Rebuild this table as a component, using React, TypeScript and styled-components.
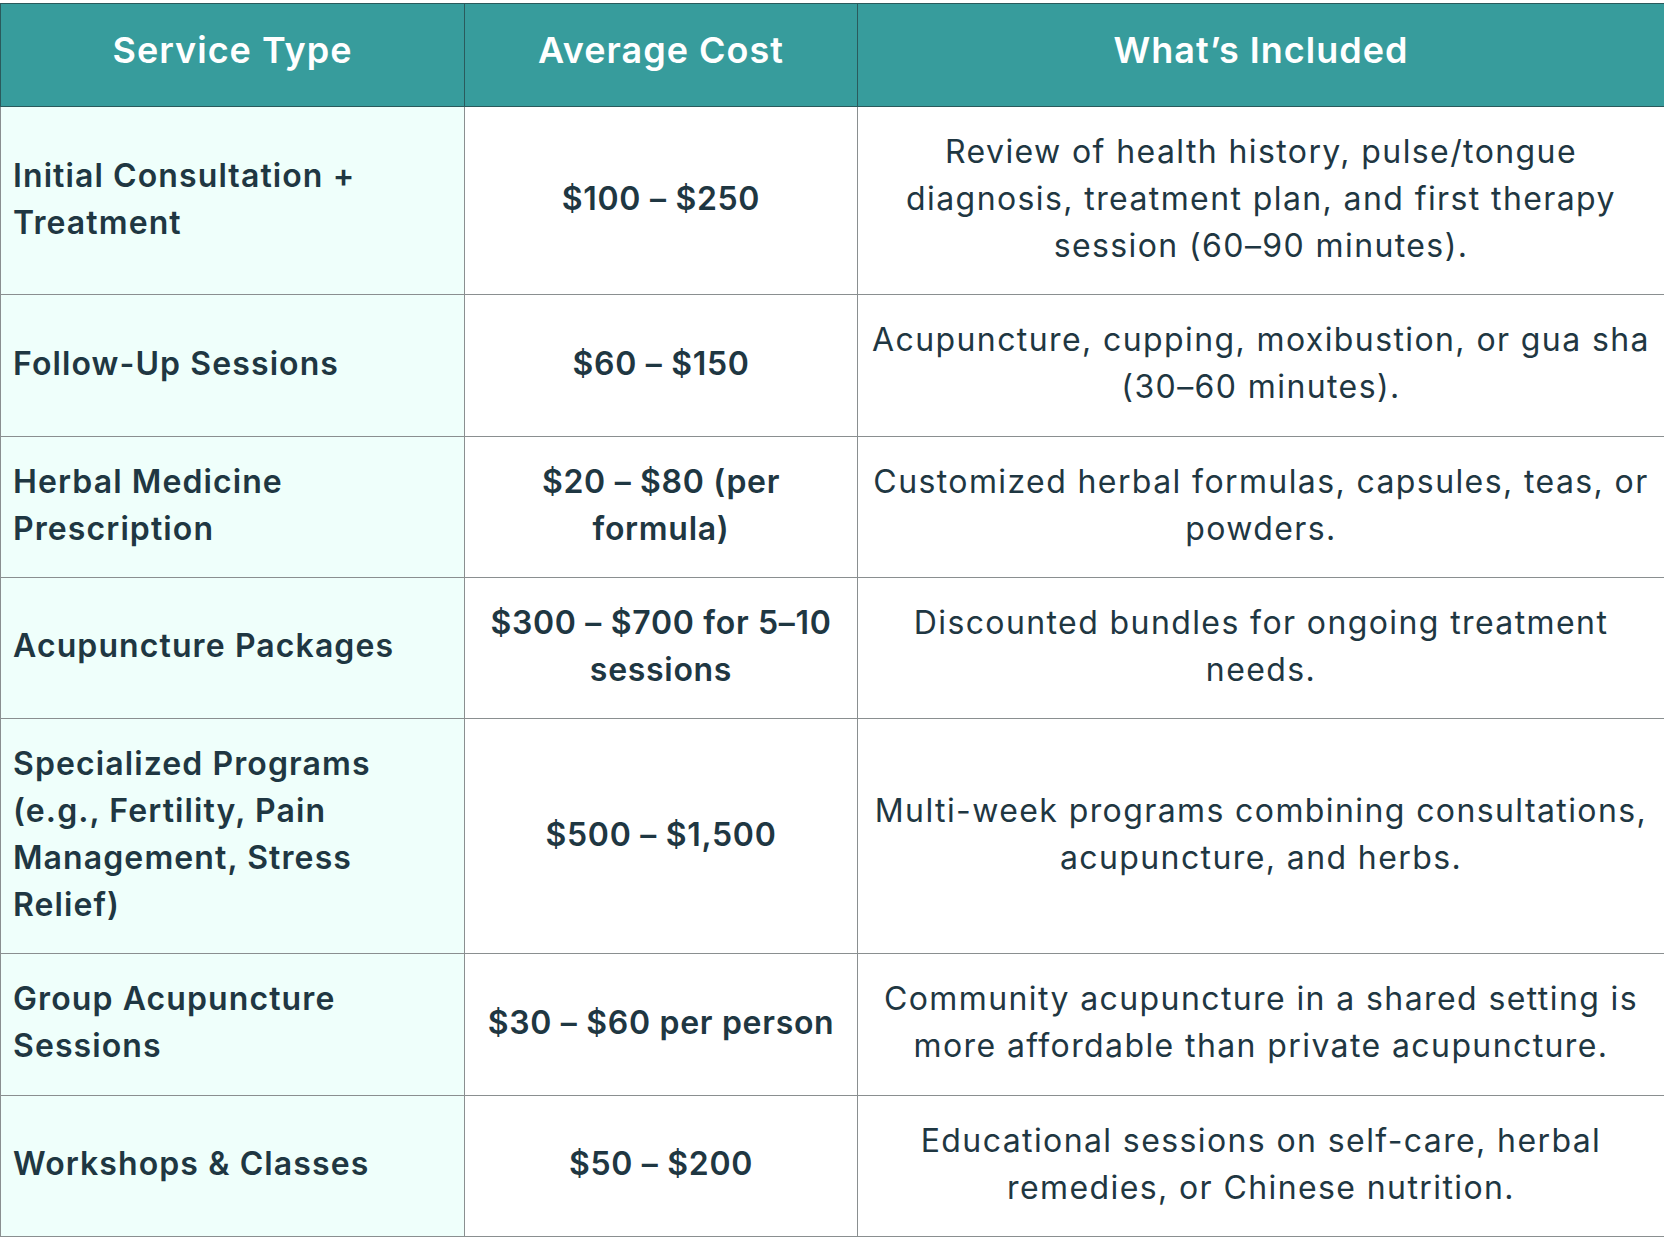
import React from "react";
import styled, { createGlobalStyle } from "styled-components";

const Global = createGlobalStyle`
  html, body { margin: 0; padding: 0; background: #ffffff; }
  body { font-family: Inter, "Noto Sans", sans-serif; }
`;

const Page = styled.div`
  padding-top: 3px;
  width: 1664px;
`;

const Table = styled.table`
  width: 1664px;
  border-collapse: collapse;
  table-layout: fixed;
  border: 1px solid #3d4c4f;
`;

const HeadCell = styled.th`
  background: #379c9c;
  color: #ffffff;
  font-family: Inter, "Noto Sans", sans-serif;
  font-weight: 600;
  font-size: 36px;
  line-height: 56px;
  padding: 18px 12px 28px;
  text-align: center;
  border: 1px solid #2a5a5c;
  letter-spacing: 1px;
`;

type Variant = "name" | "cost" | "desc";

const spacing: Record<Variant, string> = {
  name: "1.1px",
  cost: "0.7px",
  desc: "1.4px",
};

const Cell = styled.td<{ $variant: Variant }>`
  color: #1f3742;
  font-family: Inter, "Noto Sans", sans-serif;
  font-size: 32px;
  line-height: 47px;
  padding: 21px 12px 25.3px;
  vertical-align: middle;
  border: 1.5px solid #8a8f90;
  background: ${(p) => (p.$variant === "name" ? "#effffb" : "#ffffff")};
  font-weight: ${(p) => (p.$variant === "desc" ? 400 : 600)};
  letter-spacing: ${(p) => spacing[p.$variant]};
  text-align: ${(p) => (p.$variant === "name" ? "left" : "center")};
`;

const Line = styled.span`
  display: block;
  white-space: nowrap;
`;

type Row = { name: string[]; cost: string[]; desc: string[] };

const rows: Row[] = [
  {
    name: ["Initial Consultation +", "Treatment"],
    cost: ["$100 – $250"],
    desc: [
      "Review of health history, pulse/tongue",
      "diagnosis, treatment plan, and first therapy",
      "session (60–90 minutes).",
    ],
  },
  {
    name: ["Follow-Up Sessions"],
    cost: ["$60 – $150"],
    desc: ["Acupuncture, cupping, moxibustion, or gua sha", "(30–60 minutes)."],
  },
  {
    name: ["Herbal Medicine", "Prescription"],
    cost: ["$20 – $80 (per", "formula)"],
    desc: ["Customized herbal formulas, capsules, teas, or", "powders."],
  },
  {
    name: ["Acupuncture Packages"],
    cost: ["$300 – $700 for 5–10", "sessions"],
    desc: ["Discounted bundles for ongoing treatment", "needs."],
  },
  {
    name: ["Specialized Programs", "(e.g., Fertility, Pain", "Management, Stress", "Relief)"],
    cost: ["$500 – $1,500"],
    desc: ["Multi-week programs combining consultations,", "acupuncture, and herbs."],
  },
  {
    name: ["Group Acupuncture", "Sessions"],
    cost: ["$30 – $60 per person"],
    desc: [
      "Community acupuncture in a shared setting is",
      "more affordable than private acupuncture.",
    ],
  },
  {
    name: ["Workshops & Classes"],
    cost: ["$50 – $200"],
    desc: ["Educational sessions on self-care, herbal", "remedies, or Chinese nutrition."],
  },
];

const Lines = ({ items }: { items: string[] }) => (
  <>
    {items.map((t) => (
      <Line key={t}>{t}</Line>
    ))}
  </>
);

export default function App() {
  return (
    <>
      <Global />
      <Page>
        <Table>
          <colgroup>
            <col style={{ width: 464 }} />
            <col style={{ width: 393 }} />
            <col style={{ width: 807 }} />
          </colgroup>
          <thead>
            <tr>
              <HeadCell>Service Type</HeadCell>
              <HeadCell>Average Cost</HeadCell>
              <HeadCell>What’s Included</HeadCell>
            </tr>
          </thead>
          <tbody>
            {rows.map((r) => (
              <tr key={r.name.join(" ")}>
                <Cell $variant="name">
                  <Lines items={r.name} />
                </Cell>
                <Cell $variant="cost">
                  <Lines items={r.cost} />
                </Cell>
                <Cell $variant="desc">
                  <Lines items={r.desc} />
                </Cell>
              </tr>
            ))}
          </tbody>
        </Table>
      </Page>
    </>
  );
}
